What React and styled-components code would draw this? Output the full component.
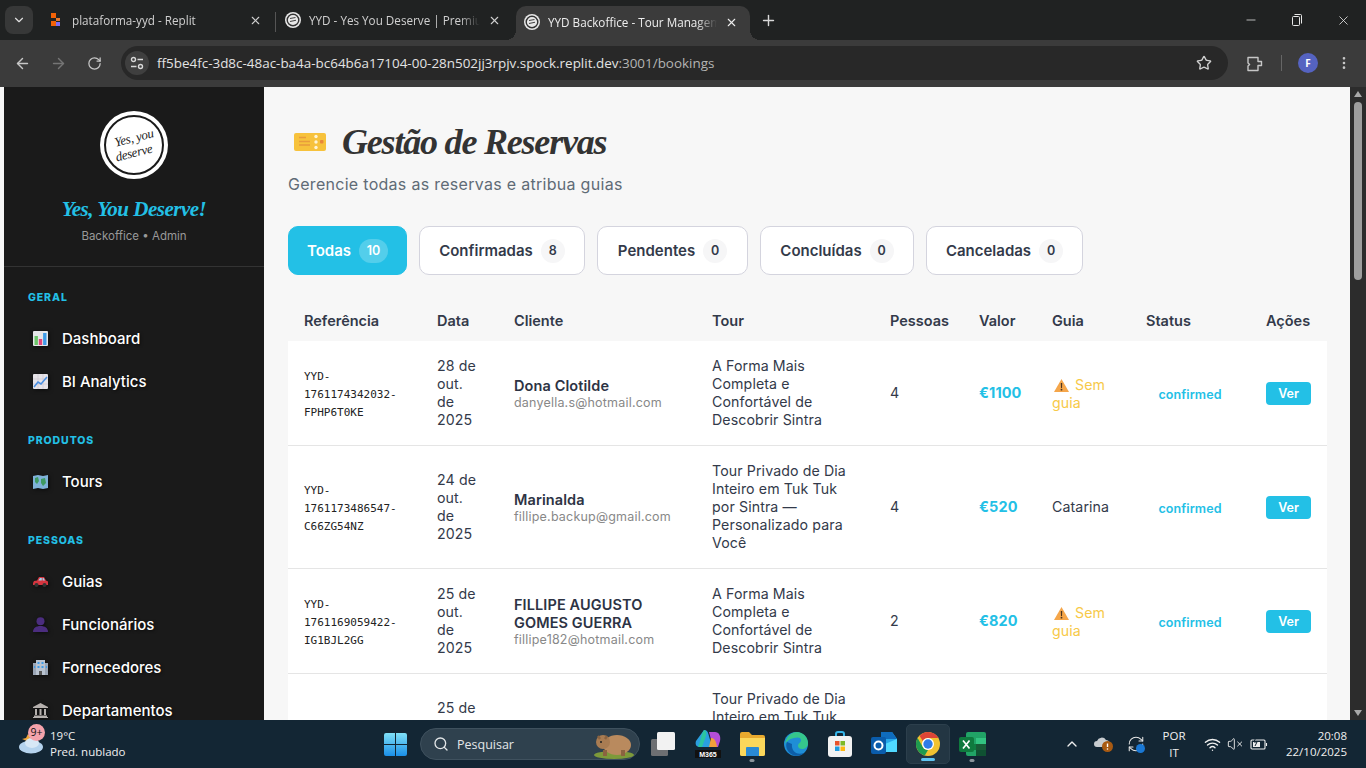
import React from 'react';
import styled, { createGlobalStyle } from 'styled-components';
import { ArrowLeft, ArrowRight, RotateCw, Star, X, Plus, Minus, ChevronDown, ChevronUp, Search, EllipsisVertical, VolumeX, Wifi, RefreshCw } from 'lucide-react';

const SANS = '"Inter", "Open Sans", sans-serif';
const SCRIPT = '"Liberation Serif", serif';
const UI = '"Open Sans", "Noto Sans", sans-serif';
const CYAN = '#23c0e6';

const Global = createGlobalStyle`
  html, body { margin: 0; padding: 0; height: 768px; overflow: hidden; background: #f7f7f7; }
  * { box-sizing: border-box; }
  body { font-family: ${SANS}; }
`;

const Screen = styled.div`
  width: 1366px;
  height: 768px;
  display: flex;
  flex-direction: column;
  overflow: hidden;
`;

/* browser chrome */
const TabStrip = styled.div`
  height: 40px;
  background: #202222;
  display: flex;
  align-items: flex-end;
  padding-left: 5px;
  color: #d6d6d6;
  font-family: ${UI};
  font-size: 11.7px;
`;
const TabMenu = styled.div`
  width: 28px;
  height: 28px;
  margin-bottom: 6px;
  margin-right: 7px;
  border-radius: 8px;
  background: #373838;
  display: flex;
  align-items: center;
  justify-content: center;
`;
const Tab = styled.div`
  position: relative;
  width: ${p => p.$w}px;
  height: 34px;
  display: flex;
  align-items: center;
  padding: 0 ${p => p.$right}px 6px ${p => p.$pad}px;
  gap: 8px;
  border-radius: 10px 10px 0 0;
  background: ${p => p.$active ? '#3b3b3b' : 'transparent'};
  color: ${p => p.$active ? '#eeeeee' : '#d0d0d0'};
  ${p => p.$active && `
    padding-bottom: 2px;
    &::before, &::after {
      content: '';
      position: absolute;
      bottom: 0;
      width: 10px;
      height: 10px;
    }
    &::before { left: -10px; background: radial-gradient(circle at 0 0, transparent 10px, #3b3b3b 10px); }
    &::after { right: -10px; background: radial-gradient(circle at 100% 0, transparent 10px, #3b3b3b 10px); }
  `}
`;
const TabTitle = styled.span`
  flex: 1;
  white-space: nowrap;
  overflow: hidden;
  -webkit-mask-image: linear-gradient(to right, #000 88%, transparent);
  mask-image: linear-gradient(to right, #000 88%, transparent);
`;
const TabDivider = styled.div`
  width: 1px;
  height: 20px;
  margin-bottom: 8px;
  background: #555;
`;
const NewTab = styled.div`
  margin-left: 10px;
  margin-bottom: 11px;
  display: flex;
`;
const WindowButtons = styled.div`
  margin-left: auto;
  display: flex;
  align-self: flex-start;
  height: 40px;
  align-items: center;
`;
const WinBtn = styled.div`
  width: 46px;
  display: flex;
  justify-content: center;
`;
const Toolbar = styled.div`
  height: 47px;
  background: #3b3b3b;
  display: flex;
  align-items: center;
  padding-left: 4px;
  padding-bottom: 1px;
`;
const NavBtn = styled.div`
  width: 36px;
  display: flex;
  justify-content: center;
`;
const Omnibox = styled.div`
  margin-left: 9px;
  width: 1107px;
  height: 34px;
  border-radius: 17px;
  background: #282828;
  display: flex;
  align-items: center;
  padding: 0 16px 0 4px;
  font-family: ${UI};
  font-size: 13.45px;
  color: #e3e3e3;
`;
const SiteInfo = styled.div`
  width: 24px;
  height: 24px;
  border-radius: 50%;
  background: #3f3f3f;
  display: flex;
  align-items: center;
  justify-content: center;
  margin-right: 8px;
`;
const Url = styled.span`
  flex: 1;
  white-space: nowrap;
  span { color: #b4b4b4; }
`;
const ToolIcons = styled.div`
  display: flex;
  align-items: center;
  margin-left: 18px;
`;
const ToolSep = styled.div`
  width: 1px;
  height: 16px;
  background: #666;
  margin: 0 16px 0 18px;
`;
const Avatar = styled.div`
  width: 20px;
  height: 20px;
  border-radius: 50%;
  background: #5563c1;
  color: #fff;
  font: 700 10px ${UI};
  display: flex;
  align-items: center;
  justify-content: center;
  margin-right: 18px;
`;

/* page */
const Viewport = styled.div`
  height: 633px;
  display: flex;
  background: #f7f7f7;
  overflow: hidden;
`;
const Sidebar = styled.aside`
  width: 260px;
  margin-left: 4px;
  flex-shrink: 0;
  background: #1a1a1a;
  overflow: hidden;
`;
const Brand = styled.div`
  height: 180px;
  padding-top: 24px;
  border-bottom: 1px solid #333;
  display: flex;
  flex-direction: column;
  align-items: center;
`;
const LogoRound = styled.div`
  width: 68px;
  height: 68px;
  border-radius: 50%;
  background: #fff;
  padding: 4px;
`;
const LogoRing = styled.div`
  width: 100%;
  height: 100%;
  border-radius: 50%;
  border: 2px solid #1a1a1a;
  display: flex;
  flex-direction: column;
  align-items: center;
  justify-content: center;
  color: #222;
  font: italic 13px/15px ${SCRIPT};
  letter-spacing: -.3px;
  span { transform: rotate(-14deg); }
`;
const BrandName = styled.div`
  margin-top: 15px;
  font: italic 700 21px/30px ${SCRIPT};
  letter-spacing: -.5px;
  color: ${CYAN};
`;
const BrandSub = styled.div`
  margin-top: 4px;
  font-size: 11.5px;
  line-height: 16px;
  color: #999;
`;
const NavArea = styled.nav`
  padding-top: 24px;
`;
const NavSection = styled.div`
  margin-bottom: 31px;
`;
const NavLabel = styled.div`
  padding-left: 24px;
  margin-bottom: 12px;
  height: 14px;
  font-size: 10.5px;
  line-height: 14px;
  font-weight: 800;
  letter-spacing: 0.9px;
  color: ${CYAN};
`;
const NavItem = styled.div`
  height: 43px;
  display: flex;
  align-items: center;
  padding-left: 29px;
  gap: 14px;
  color: #fff;
  font-size: 15px;
  font-weight: 500;
  text-shadow: 1px 1px 3px rgba(0,0,0,.6);
  svg { filter: drop-shadow(1px 1px 2px rgba(0,0,0,.6)); }
`;
const Main = styled.main`
  flex: 1;
  padding: 24px 23px 0 24px;
  overflow: hidden;
`;
const TitleRow = styled.div`
  height: 62px;
  display: flex;
  align-items: center;
  padding-left: 6px;
  gap: 16px;
`;
const Title = styled.h1`
  margin: 0;
  font: italic 700 36px/62px ${SCRIPT};
  letter-spacing: -1.2px;
  color: #333;
`;
const Subtitle = styled.p`
  margin: -1px 0 0;
  height: 24px;
  font-size: 16px;
  line-height: 24px;
  letter-spacing: .29px;
  color: #5f6b76;
`;
const Filters = styled.div`
  display: flex;
  gap: 12px;
  margin-top: 30px;
`;
const Filter = styled.div`
  height: 49px;
  padding: 0 20px;
  width: ${p => p.$w}px;
  display: flex;
  align-items: center;
  justify-content: center;
  gap: 8px;
  border-radius: 10px;
  border: 1px solid ${p => p.$active ? CYAN : '#d4d4de'};
  background: ${p => p.$active ? CYAN : '#fff'};
  color: ${p => p.$active ? '#fff' : '#333a4a'};
  font-size: 15px;
  font-weight: 600;
`;
const Badge = styled.span`
  min-width: ${p => p.$wide ? 29 : 24}px;
  height: 24px;
  border-radius: 12px;
  display: flex;
  align-items: center;
  justify-content: center;
  font-size: 12.5px;
  background: ${p => p.$active ? 'rgba(255,255,255,.22)' : '#f6f6f7'};
`;
const Table = styled.table`
  margin-top: 25px;
  width: 1039px;
  table-layout: fixed;
  border-collapse: separate;
  border-spacing: 0;
  color: #333a4a;
`;
const Th = styled.th`
  height: 41px;
  padding: 0 0 1px 16px;
  text-align: left;
  font-size: 14.5px;
  font-weight: 600;
  white-space: nowrap;
`;
const Td = styled.td`
  padding: 16px;
  background: #fff;
  border-bottom: 1px solid #e5e5e5;
  font-size: 14.2px;
  line-height: 18px;
  letter-spacing: .1px;
  vertical-align: middle;
`;
const Ref = styled.code`
  display: block;
  padding-top: 4px;
  font: 11px/18px "DejaVu Sans Mono", "Liberation Mono", monospace;
  letter-spacing: 0;
  color: #222;
`;
const ClientName = styled.div`
  font-weight: 600;
  font-size: 14.5px;
  color: #2d3344;
`;
const ClientMail = styled.div`
  font-size: 12.5px;
  line-height: 15px;
  letter-spacing: .2px;
  color: #888;
`;
const Price = styled.span`
  font-weight: 700;
  font-size: 14.5px;
  color: ${CYAN};
`;
const NoGuide = styled.span`
  display: block;
  padding-top: 2px;
  color: #f7c948;
  svg { vertical-align: -2px; margin: 0 6px 0 2px; }
`;
const StatusText = styled.div`
  padding-top: 3px;
  text-align: center;
  font-size: 12.5px;
  font-weight: 600;
  letter-spacing: .1px;
  color: ${CYAN};
`;
const VerButton = styled.button`
  width: 45px;
  height: 23px;
  border: 0;
  border-radius: 4px;
  background: ${CYAN};
  color: #fff;
  font: 600 12.5px ${SANS};
  padding: 0;
`;
const Scrollbar = styled.div`
  width: 16px;
  flex-shrink: 0;
  background: #2c2c2c;
  display: flex;
  flex-direction: column;
  align-items: center;
  padding-top: 4px;
`;
const Thumb = styled.div`
  width: 8px;
  height: 178px;
  margin-top: 5px;
  border-radius: 4px;
  background: #9e9e9e;
`;
const ScrollArrow = styled.div`
  width: 0;
  height: 0;
  border-left: 4px solid transparent;
  border-right: 4px solid transparent;
  ${p => p.$down ? 'border-top: 6px solid #a8a8a8; margin-top: auto; margin-bottom: 4px;' : 'border-bottom: 6px solid #a8a8a8;'}
`;

/* windows taskbar */
const Taskbar = styled.footer`
  height: 48px;
  background: #132634;
  display: flex;
  align-items: center;
  color: #f0f0f0;
  font-family: ${UI};
  font-size: 12px;
`;
const Weather = styled.div`
  width: 373px;
  padding-left: 18px;
  display: flex;
  align-items: center;
  gap: 6px;
  line-height: 16px;
  font-size: 11.5px;
`;
const WeatherIcon = styled.div`
  position: relative;
  width: 26px;
  height: 30px;
`;
const NotifBadge = styled.span`
  position: absolute;
  top: -5px;
  left: 10px;
  width: 17px;
  height: 17px;
  border-radius: 50%;
  background: #f4a3ac;
  color: #111;
  font-size: 10.5px;
  line-height: 17px;
  text-align: center;
`;
const TaskSlot = styled.div`
  width: ${p => p.$w || 44}px;
  height: 40px;
  flex-shrink: 0;
  position: relative;
  display: flex;
  align-items: center;
  justify-content: center;
  border-radius: 5px;
  ${p => p.$active && 'background: #233643; border: 1px solid #2c3f4c;'}
  ${p => (p.$open || p.$active) && `
    &::after {
      content: '';
      position: absolute;
      bottom: 2px;
      left: 50%;
      transform: translateX(-50%);
      height: 3px;
      border-radius: 2px;
      width: ${p.$active ? 14 : 5}px;
      background: ${p.$active ? '#5fc5f3' : '#8a949b'};
    }
  `}
`;
const SearchBox = styled.div`
  width: 220px;
  height: 32px;
  margin: 0 4px 0 2px;
  flex-shrink: 0;
  border-radius: 16px;
  background: #2f414e;
  border: 1px solid #3f515e;
  display: flex;
  align-items: center;
  padding: 0 4px 0 12px;
  gap: 8px;
  color: #e3e6e8;
  font-size: 12.5px;
`;
const SearchLabel = styled.span`
  flex: 1;
`;
const Tray = styled.div`
  margin-left: auto;
  display: flex;
  align-items: center;
  height: 100%;
`;
const TrayIcon = styled.div`
  width: ${p => p.$w || 32}px;
  display: flex;
  justify-content: center;
`;
const Lang = styled.div`
  width: 44px;
  margin-right: 4px;
  text-align: center;
  line-height: 17px;
  font-size: 11.5px;
`;
const Clock = styled.div`
  width: 94px;
  padding-right: 19px;
  text-align: right;
  line-height: 16px;
  font-size: 11.5px;
`;
const SyncWrap = styled.span`
  position: relative;
  display: flex;
`;
const SyncDot = styled.span`
  position: absolute;
  right: 0;
  bottom: 0;
  width: 9px;
  height: 9px;
  border-radius: 50%;
  background: #1a78d4;
`;

/* drawn emoji */
const ChartEmoji = () => (
  <svg width="15" height="15" viewBox="0 0 15 15"><rect width="15" height="15" rx="1" fill="#e6e6ea"/><rect x="1.5" y="5" width="3.4" height="9" fill="#6cc56a"/><rect x="5.8" y="8" width="3.4" height="6" fill="#e0457b"/><rect x="10.1" y="2" width="3.4" height="12" fill="#3f9be8"/></svg>
);
const TrendEmoji = () => (
  <svg width="15" height="15" viewBox="0 0 15 15"><rect width="15" height="15" rx="1" fill="#e6e3e8"/><path d="M0 5h15M0 10h15M5 0v15M10 0v15" stroke="#c9c5cf" strokeWidth=".6"/><path d="M1 13 5 8l3 2 6-7" fill="none" stroke="#4a8fe0" strokeWidth="1.6"/></svg>
);
const MapEmoji = () => (
  <svg width="15" height="14" viewBox="0 0 15 14"><path d="M0 1l5-1 5 1 5-1v13l-5 1-5-1-5 1z" fill="#7fb2d9"/><path d="M2 3l3-1 1 4-2 3-2-2zM8 4l4-1 1 5-3 3-2-3z" fill="#3e9a62"/></svg>
);
const CarEmoji = () => (
  <svg width="15" height="10" viewBox="0 0 15 10"><path d="M0 6l1-2 3-.5L6 0h5l2 3.4 2 1V8H0z" fill="#d5353f"/><path d="M7 1h1.8v2.4H5.4zM9.6 1h1l1.4 2.4H9.6z" fill="#9fd3ec"/><circle cx="3.5" cy="8" r="2" fill="#333"/><circle cx="11.5" cy="8" r="2" fill="#333"/></svg>
);
const BustEmoji = () => (
  <svg width="15" height="15" viewBox="0 0 15 15"><circle cx="7.5" cy="4.2" r="4" fill="#4b2d7f"/><path d="M0 15c0-4 3-6 7.5-6s7.5 2 7.5 6z" fill="#4b2d7f"/></svg>
);
const BuildingEmoji = () => (
  <svg width="15" height="15" viewBox="0 0 15 15"><rect y="3" width="15" height="12" fill="#9aa5b5"/><rect x="3" width="9" height="15" fill="#b9c3d0"/><path d="M4.5 2h2v2h-2zM8.5 2h2v2h-2zM4.5 6h2v2h-2zM8.5 6h2v2h-2zM1 6h1.2v2H1zM12.8 6H14v2h-1.2z" fill="#3f9be8"/><rect x="6" y="11" width="3" height="4" fill="#555"/></svg>
);
const BankEmoji = () => (
  <svg width="15" height="15" viewBox="0 0 15 15" fill="#b5b0ad"><path d="M7.5 0 15 4v1H0V4z"/><path d="M2 6h2v6H2zM6.5 6h2v6h-2zM11 6h2v6h-2zM1 12.5h13V14H1zM0 14h15v1H0z"/></svg>
);
const TicketEmoji = () => (
  <svg width="32" height="18" viewBox="0 0 32 18"><path d="M2 0h28a2 2 0 0 1 2 2v14a2 2 0 0 1-2 2H2a2 2 0 0 1-2-2V2a2 2 0 0 1 2-2z" fill="#f7c23c"/><path d="M5 4.5h7M5 8.5h11M5 12h11" stroke="#e89b3c" strokeWidth="1.4"/><circle cx="22" cy="3.5" r="1.7" fill="#fff4d4"/><circle cx="22" cy="9" r="1.7" fill="#fff4d4"/><circle cx="22" cy="14.5" r="1.7" fill="#fff4d4"/><rect x="26" y="7" width="3.5" height="3.5" rx="1" fill="#e8873c"/></svg>
);
const WarnEmoji = () => (
  <svg width="15" height="13" viewBox="0 0 15 13"><path d="M7.5 0 15 13H0z" fill="#f5a64a"/><path d="M6.8 4h1.4l-.2 5H7z" fill="#4a3520"/><circle cx="7.5" cy="10.7" r=".9" fill="#4a3520"/></svg>
);

/* tab favicons and toolbar glyphs */
const ReplitIcon = () => (
  <svg width="13" height="14" viewBox="0 0 13 14"><rect x="0" y="0" width="5" height="5" fill="#f26207"/><rect x="5" y="5" width="4" height="3" fill="#e8792f"/><rect x="0" y="8" width="5" height="5" fill="#f26207"/><rect x="5" y="9" width="4" height="4" fill="#7c6cf2"/></svg>
);
const YydFavicon = () => (
  <svg width="16" height="16" viewBox="0 0 16 16"><circle cx="8" cy="8" r="8" fill="#e8e8e8"/><circle cx="8" cy="8" r="5.8" fill="none" stroke="#333" strokeWidth="1.4"/><path d="M5 6.5l5.5-1M5 9.5l6-1.2" stroke="#444" strokeWidth="1.1"/></svg>
);
const TuneIcon = () => (
  <svg width="14" height="14" viewBox="0 0 14 14" fill="none" stroke="#d8d8d8" strokeWidth="1.4"><circle cx="3.5" cy="3.5" r="2"/><path d="M7.5 3.5H13M1 10.5h5.5"/><circle cx="10.5" cy="10.5" r="2"/></svg>
);
const ExtensionIcon = () => (
  <svg width="17" height="17" viewBox="0 0 17 17" fill="none" stroke="#c7c7c7" strokeWidth="1.4"><path d="M2 2.5h10v4h3.5v4H12v5H2v-4.5l1.6-1.5L2 8z" strokeLinejoin="round"/></svg>
);

/* taskbar icons */
const WinLogo = () => (
  <svg width="23" height="23" viewBox="0 0 23 23"><defs><linearGradient id="w" x1="0" y1="0" x2="0" y2="1"><stop offset="0" stopColor="#7fe0f7"/><stop offset="1" stopColor="#1a8fe8"/></linearGradient></defs><path d="M0 2a2 2 0 0 1 2-2h9v11H0zM12 0h9a2 2 0 0 1 2 2v9H12zM0 12h11v11H2a2 2 0 0 1-2-2zM12 12h11v9a2 2 0 0 1-2 2h-9z" fill="url(#w)"/></svg>
);
const Wombat = () => (
  <svg width="42" height="32" viewBox="0 0 42 32"><ellipse cx="21" cy="27" rx="20" ry="4" fill="#7d9a3a"/><ellipse cx="24" cy="17" rx="14" ry="10" fill="#b98a5e"/><circle cx="10" cy="14" r="7" fill="#a97c52"/><path d="M5 8l2 3M14 8l-2 3" stroke="#8b6340" strokeWidth="2.4"/><circle cx="8" cy="14" r="1" fill="#222"/><rect x="10" y="22" width="4" height="6" fill="#8b6340"/><rect x="28" y="22" width="4" height="6" fill="#8b6340"/></svg>
);
const TaskView = () => (
  <svg width="28" height="24" viewBox="0 0 28 24"><rect x="0" y="7" width="17" height="17" rx="1.5" fill="#6d6f72"/><rect x="6" y="0" width="18" height="18" rx="1.5" fill="#f2f2f2"/></svg>
);
const M365 = () => (
  <svg width="26" height="28" viewBox="0 0 26 28"><path d="M9 0c3 0 4 2 5 6l3 11H5C1 17 0 14 1 11z" fill="#2a9fe0"/><path d="M9 0c2 0 3 3 2 6L7 17H3c3-6 3-13 6-17z" fill="#2bc4a0"/><path d="M14 2h6c4 0 6 4 5 9l-2 6h-5z" fill="#b44ed8"/><path d="M16 8c3 0 5 2 6 9h-8z" fill="#f0a13c"/><rect y="20" width="26" height="8" fill="#111"/><text x="13" y="27" textAnchor="middle" fontSize="7" fontWeight="700" fill="#fff" fontFamily="Liberation Sans, sans-serif">M365</text></svg>
);
const Folder = () => (
  <svg width="25" height="24" viewBox="0 0 25 24"><path d="M0 2a2 2 0 0 1 2-2h7l3 3h11a2 2 0 0 1 2 2v17a2 2 0 0 1-2 2H2a2 2 0 0 1-2-2z" fill="#e8a92e"/><path d="M0 6h25v16a2 2 0 0 1-2 2H2a2 2 0 0 1-2-2z" fill="#fbd75b"/><path d="M7 15h11a1 1 0 0 1 1 1v8H6v-8a1 1 0 0 1 1-1z" fill="#2a8ad4"/></svg>
);
const Edge = () => (
  <svg width="24" height="26" viewBox="0 0 24 26"><circle cx="12" cy="13" r="12" fill="#1f8ed6"/><path d="M1 13C2 5 8 1 13 1c6 0 11 5 11 11 0 4-3 6-6 6-2 0-4-1-4-3 0-3 3-3 3-6S13 6 10 7C5 8 2 11 1 13z" fill="#35c68c"/><path d="M8 13c-1 6 4 12 12 9-3 3-9 4-13 1S1 15 3 11z" fill="#0d5ea8"/></svg>
);
const Store = () => (
  <svg width="24" height="26" viewBox="0 0 24 26"><path d="M8 5V3a2 2 0 0 1 2-2h4a2 2 0 0 1 2 2v2" stroke="#35b4e8" strokeWidth="2" fill="none"/><rect y="5" width="24" height="21" rx="3" fill="#f2f2f2"/><rect x="7" y="10" width="4.5" height="4.5" fill="#e8532c"/><rect x="12.5" y="10" width="4.5" height="4.5" fill="#7db928"/><rect x="7" y="15.5" width="4.5" height="4.5" fill="#1e9be0"/><rect x="12.5" y="15.5" width="4.5" height="4.5" fill="#fdb813"/></svg>
);
const Outlook = () => (
  <svg width="26" height="24" viewBox="0 0 26 24"><path d="M10 0h11l5 7v11a2 2 0 0 1-2 2H10z" fill="#28a8ea"/><path d="M10 0h11l5 7H10z" fill="#0f6cbd"/><path d="M14 12l12-5v13H14z" fill="#50d9ff"/><rect y="5" width="15" height="17" rx="2" fill="#0a5cab"/><circle cx="7.5" cy="13.5" r="4" fill="none" stroke="#fff" strokeWidth="2"/></svg>
);
const ChromeLogo = () => (
  <svg width="24" height="24" viewBox="0 0 24 24"><circle cx="12" cy="12" r="12" fill="#f2c230"/><path d="M12 0a12 12 0 0 1 10.4 6H12a6 6 0 0 0-5.2 3L3.6 4A12 12 0 0 1 12 0z" fill="#dd4437"/><path d="M1.6 6 6.8 15a6 6 0 0 0 5.2 3l-3.2 5.6A12 12 0 0 1 1.6 6z" fill="#1e9b4f"/><circle cx="12" cy="12" r="6" fill="#fff"/><circle cx="12" cy="12" r="4.7" fill="#2f7ce8"/></svg>
);
const Excel = () => (
  <svg width="27" height="24" viewBox="0 0 27 24"><rect x="7" width="20" height="24" rx="2" fill="#21a366"/><rect x="17" y="6" width="10" height="6" fill="#33c481"/><rect x="7" y="12" width="10" height="6" fill="#107c41"/><rect x="17" y="12" width="10" height="6" fill="#185c37"/><rect x="17" y="18" width="10" height="6" fill="#0f5132"/><rect y="5" width="15" height="15" rx="2" fill="#0f7a3e"/><path d="M4 8.5l6.5 8M10.5 8.5l-6.5 8" stroke="#fff" strokeWidth="1.7"/></svg>
);
const CloudBadge = () => (
  <svg width="20" height="18" viewBox="0 0 20 18"><path d="M3 12a3 3 0 0 1 0-6 5 5 0 0 1 9-1 3 3 0 0 1 3 3v4z" fill="#c8ccd0"/><circle cx="13.5" cy="11.5" r="5.5" fill="#a85a12"/><path d="M13.5 8.5v3.5" stroke="#fff" strokeWidth="1.4"/><circle cx="13.5" cy="14" r=".8" fill="#fff"/></svg>
);
const Battery = () => (
  <svg width="18" height="14" viewBox="0 0 18 14" fill="none" stroke="#eee" strokeWidth="1.1"><rect x="1" y="3" width="14" height="9" rx="1"/><path d="M16.5 6v3"/><path d="M3 5h7v5H3z" fill="#eee" stroke="none"/><path d="M6 0 4 5h3l-2 4" stroke="#132634" strokeWidth="1"/></svg>
);
const RestoreIcon = () => (
  <svg width="10" height="12" viewBox="0 0 10 12" fill="none" stroke="#e8e8e8" strokeWidth="1"><rect x=".5" y="2.5" width="7" height="9" rx="1"/><path d="M2.5 .5h6a1 1 0 0 1 1 1v8"/></svg>
);

const navGroups = [
  { label: 'GERAL', items: [['Dashboard', ChartEmoji], ['BI Analytics', TrendEmoji]] },
  { label: 'PRODUTOS', items: [['Tours', MapEmoji]] },
  { label: 'PESSOAS', items: [['Guias', CarEmoji], ['Funcionários', BustEmoji], ['Fornecedores', BuildingEmoji], ['Departamentos', BankEmoji]] },
];

const filters = [
  ['Todas', 10, 119],
  ['Confirmadas', 8, 166],
  ['Pendentes', 0, 151],
  ['Concluídas', 0, 154],
  ['Canceladas', 0, 157],
];

const columns = [
  ['Referência', 133], ['Data', 77], ['Cliente', 198], ['Tour', 178], ['Pessoas', 89],
  ['Valor', 73], ['Guia', 94], ['Status', 120], ['Ações', 77],
];

const FORMA = 'A Forma Mais Completa e Confortável de Descobrir Sintra';
const PRIVADO = 'Tour Privado de Dia Inteiro em Tuk Tuk por Sintra — Personalizado para Você';

const bookings = [
  { ref: ['YYD-', '1761174342032-', 'FPHP6T0KE'], date: '28 de out. de 2025', name: 'Dona Clotilde', mail: 'danyella.s@hotmail.com', tour: FORMA, people: 4, price: '€1100' },
  { ref: ['YYD-', '1761173486547-', 'C66ZG54NZ'], date: '24 de out. de 2025', name: 'Marinalda', mail: 'fillipe.backup@gmail.com', tour: PRIVADO, people: 4, price: '€520', guide: 'Catarina' },
  { ref: ['YYD-', '1761169059422-', 'IG1BJL2GG'], date: '25 de out. de 2025', name: 'FILLIPE AUGUSTO GOMES GUERRA', mail: 'fillipe182@hotmail.com', tour: FORMA, people: 2, price: '€820' },
];

function App() {
  return (
    <Screen>
      <Global />
      <TabStrip>
        <TabMenu><ChevronDown size={14} color="#e0e0e0" /></TabMenu>
        <Tab $w={235} $pad={11} $right={13}>
          <ReplitIcon />
          <TabTitle>plataforma-yyd - Replit</TabTitle>
          <X size={13} color="#cfcfcf" />
        </Tab>
        <TabDivider />
        <Tab $w={240} $pad={9} $right={15}>
          <YydFavicon />
          <TabTitle>YYD - Yes You Deserve | Premium Tours</TabTitle>
          <X size={13} color="#cfcfcf" />
        </Tab>
        <Tab $w={234} $pad={8} $right={12} $active>
          <YydFavicon />
          <TabTitle>YYD Backoffice - Tour Management</TabTitle>
          <X size={13} color="#eeeeee" />
        </Tab>
        <NewTab><Plus size={17} color="#d8d8d8" /></NewTab>
        <WindowButtons>
          <WinBtn><Minus size={14} color="#e8e8e8" strokeWidth={1.3} /></WinBtn>
          <WinBtn><RestoreIcon /></WinBtn>
          <WinBtn><X size={15} color="#e8e8e8" strokeWidth={1.3} /></WinBtn>
        </WindowButtons>
      </TabStrip>
      <Toolbar>
        <NavBtn><ArrowLeft size={17} color="#c7c7c7" /></NavBtn>
        <NavBtn><ArrowRight size={17} color="#757575" /></NavBtn>
        <NavBtn><RotateCw size={15} color="#c7c7c7" /></NavBtn>
        <Omnibox>
          <SiteInfo><TuneIcon /></SiteInfo>
          <Url>ff5be4fc-3d8c-48ac-ba4a-bc64b6a17104-00-28n502jj3rpjv.spock.replit.dev<span>:3001/bookings</span></Url>
          <Star size={16} color="#d0d0d0" />
        </Omnibox>
        <ToolIcons>
          <ExtensionIcon />
          <ToolSep />
          <Avatar>F</Avatar>
          <EllipsisVertical size={16} color="#c7c7c7" />
        </ToolIcons>
      </Toolbar>

      <Viewport>
        <Sidebar>
          <Brand>
            <LogoRound>
              <LogoRing>
                <span>Yes, you</span>
                <span>deserve</span>
              </LogoRing>
            </LogoRound>
            <BrandName>Yes, You Deserve!</BrandName>
            <BrandSub>Backoffice • Admin</BrandSub>
          </Brand>
          <NavArea>
            {navGroups.map(g => (
              <NavSection key={g.label}>
                <NavLabel>{g.label}</NavLabel>
                {g.items.map(([name, Icon]) => (
                  <NavItem key={name}><Icon />{name}</NavItem>
                ))}
              </NavSection>
            ))}
          </NavArea>
        </Sidebar>

        <Main>
          <TitleRow>
            <TicketEmoji />
            <Title>Gestão de Reservas</Title>
          </TitleRow>
          <Subtitle>Gerencie todas as reservas e atribua guias</Subtitle>
          <Filters>
            {filters.map(([name, count, w], i) => (
              <Filter key={name} $w={w} $active={i === 0}>
                {name}
                <Badge $active={i === 0} $wide={count > 9}>{count}</Badge>
              </Filter>
            ))}
          </Filters>
          <Table>
            <colgroup>
              {columns.map(([name, w]) => <col key={name} width={w} />)}
            </colgroup>
            <thead>
              <tr>{columns.map(([name]) => <Th key={name}>{name}</Th>)}</tr>
            </thead>
            <tbody>
              {bookings.map(b => (
                <tr key={b.mail}>
                  <Td><Ref>{b.ref.map(l => <div key={l}>{l}</div>)}</Ref></Td>
                  <Td>{b.date}</Td>
                  <Td>
                    <ClientName>{b.name}</ClientName>
                    <ClientMail>{b.mail}</ClientMail>
                  </Td>
                  <Td>{b.tour}</Td>
                  <Td>{b.people}</Td>
                  <Td><Price>{b.price}</Price></Td>
                  <Td>{b.guide || <NoGuide><WarnEmoji />Sem guia</NoGuide>}</Td>
                  <Td><StatusText>confirmed</StatusText></Td>
                  <Td><VerButton>Ver</VerButton></Td>
                </tr>
              ))}
              <tr>
                <Td><Ref>YYD-</Ref></Td>
                <Td>25 de out. de 2025</Td>
                <Td />
                <Td>{PRIVADO}</Td>
                <Td /><Td /><Td /><Td /><Td />
              </tr>
            </tbody>
          </Table>
        </Main>

        <Scrollbar>
          <ScrollArrow />
          <Thumb />
          <ScrollArrow $down />
        </Scrollbar>
      </Viewport>

      <Taskbar>
        <Weather>
          <WeatherIcon>
            <svg width="26" height="26" viewBox="0 0 26 26">
              <path d="M4 10l4-1 2-4 3 3 3 1-2 5z" fill="#f0a53a" />
              <ellipse cx="13" cy="18" rx="12" ry="6.5" fill="#b5d3ee" />
              <ellipse cx="14" cy="14" rx="7" ry="5" fill="#d8e8f6" />
            </svg>
            <NotifBadge>9+</NotifBadge>
          </WeatherIcon>
          <div>
            <div>19°C</div>
            <div>Pred. nublado</div>
          </div>
        </Weather>
        <TaskSlot $w={45}><WinLogo /></TaskSlot>
        <SearchBox>
          <Search size={16} color="#e3e6e8" />
          <SearchLabel>Pesquisar</SearchLabel>
          <Wombat />
        </SearchBox>
        <TaskSlot $w={42}><TaskView /></TaskSlot>
        <TaskSlot><M365 /></TaskSlot>
        <TaskSlot $open><Folder /></TaskSlot>
        <TaskSlot><Edge /></TaskSlot>
        <TaskSlot><Store /></TaskSlot>
        <TaskSlot><Outlook /></TaskSlot>
        <TaskSlot $active><ChromeLogo /></TaskSlot>
        <TaskSlot $open><Excel /></TaskSlot>
        <Tray>
          <TrayIcon><ChevronUp size={16} color="#eee" /></TrayIcon>
          <TrayIcon><CloudBadge /></TrayIcon>
          <TrayIcon>
            <SyncWrap>
              <RefreshCw size={18} color="#e8e8e8" strokeWidth={1.4} />
              <SyncDot />
            </SyncWrap>
          </TrayIcon>
          <Lang><div>POR</div><div>IT</div></Lang>
          <TrayIcon $w={24}><Wifi size={17} color="#eee" /></TrayIcon>
          <TrayIcon $w={22}><VolumeX size={16} color="#eee" strokeWidth={1.4} /></TrayIcon>
          <TrayIcon $w={26}><Battery /></TrayIcon>
          <Clock><div>20:08</div><div>22/10/2025</div></Clock>
        </Tray>
      </Taskbar>
    </Screen>
  );
}

export default App;
